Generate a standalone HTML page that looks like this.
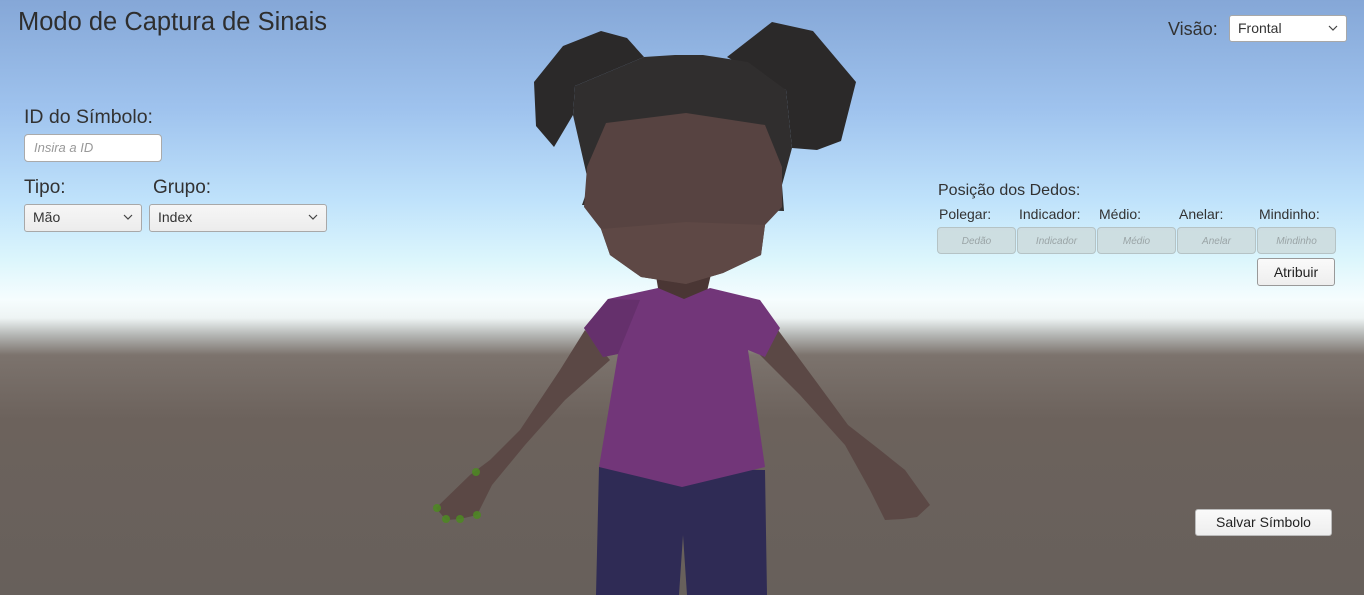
<!DOCTYPE html>
<html><head><meta charset="utf-8"><style>
*{margin:0;padding:0;box-sizing:border-box}
body{width:1364px;height:595px;overflow:hidden;position:relative;font-family:"Liberation Sans",sans-serif;color:#323232;
background:linear-gradient(to bottom,#85a7d7 0px,#9fc3ee 110px,#bfe2fb 200px,#dcf6fc 260px,#f6fdfe 300px,#eef4f4 318px,#b4b6b4 335px,#7c736d 355px,#6c625c 420px,#67605b 595px)}
.t{position:absolute;white-space:nowrap}
.dd{position:absolute;background:linear-gradient(#f6f6f6,#ececec);border:1px solid #a8a8a8;border-radius:3px;font-size:14px;padding:0 8px;line-height:25px;color:#333}
.dd svg{position:absolute;right:8px;top:9px}
.fb{position:absolute;top:227px;height:27px;background:rgba(205,218,220,.85);border:1px solid #b5c3c5;border-radius:4px;font-size:10px;font-style:italic;color:#9aa4a6;text-align:center;line-height:27px}
.btn{position:absolute;background:linear-gradient(#fafafa,#eeeeee);border:1px solid #999;border-radius:3px;font-size:14px;text-align:center;color:#222}
</style></head><body>
<svg width="1364" height="595" style="position:absolute;left:0;top:0">
<!-- arms -->
<polygon points="585,330 560,370 520,430 490,460 470,475 436,508 446,520 460,519 477,515 492,485 525,445 565,400 610,360" fill="#5b4845"/>
<polygon points="778,330 815,380 848,425 880,450 905,470 930,505 917,517 903,519 885,520 870,490 845,445 800,395 760,355" fill="#5b4845"/>
<!-- pants -->
<polygon points="599,467 765,470 767,595 687,595 683,535 679,595 596,595" fill="#2f2b55"/>
<!-- neck -->
<polygon points="655,270 712,270 705,300 660,300" fill="#4a3634"/>
<!-- shirt -->
<polygon points="608,299 658,288 684,299 710,288 760,300 780,328 765,357 748,350 765,467 682,487 599,467 618,354 603,357 584,328" fill="#723679"/>
<polygon points="608,299 584,328 603,357 618,354 640,300" fill="#65306c"/>
<!-- hair buns -->
<polygon points="534,82 563,46 601,31 627,38 644,57 575,86 573,115 554,147 536,126" fill="#2b2929"/>
<polygon points="727,57 772,22 813,31 856,82 841,141 817,150 792,148 786,90" fill="#2b2929"/>
<polygon points="575,86 644,57 675,55 703,55 748,62 786,90 792,148 782,185 784,211 582,205 589,185 573,115" fill="#302e2e"/>
<!-- face -->
<polygon points="606,123 686,113 765,125 782,167 782,207 765,225 761,255 723,273 686,284 641,277 610,255 601,229 584,207 587,167" fill="#574341"/>
<polygon points="601,229 686,222 765,225 761,255 723,273 686,284 641,277 610,255" fill="#5e4845"/>
<!-- green dots -->
<g fill="#4d8a22" opacity=".85"><circle cx="437" cy="508" r="4"/><circle cx="446" cy="519" r="4"/><circle cx="460" cy="519" r="4"/><circle cx="477" cy="515" r="4"/><circle cx="476" cy="472" r="4"/></g>
</svg>
<div class="t" style="left:18px;top:8px;font-size:25.5px;color:#2e2e2e">Modo de Captura de Sinais</div>
<div class="t" style="left:1168px;top:19px;font-size:18px">Visão:</div>
<div class="dd" style="left:1229px;top:15px;width:118px;height:27px;background:#fff">Frontal<svg width="10" height="6"><path d="M1 1L5 5L9 1" stroke="#444" fill="none" stroke-width="1.2"/></svg></div>
<div class="t" style="left:24px;top:106px;font-size:19.5px">ID do Símbolo:</div>
<div style="position:absolute;left:24px;top:134px;width:138px;height:28px;background:#fff;border:1px solid #aaa;border-radius:4px;font-size:13px;font-style:italic;color:#999;padding-left:9px;line-height:26px">Insira a ID</div>
<div class="t" style="left:24px;top:177px;font-size:19px">Tipo:</div>
<div class="t" style="left:153px;top:177px;font-size:19px">Grupo:</div>
<div class="dd" style="left:24px;top:204px;width:118px;height:28px">Mão<svg width="10" height="6"><path d="M1 1L5 5L9 1" stroke="#444" fill="none" stroke-width="1.2"/></svg></div>
<div class="dd" style="left:149px;top:204px;width:178px;height:28px">Index<svg width="10" height="6"><path d="M1 1L5 5L9 1" stroke="#444" fill="none" stroke-width="1.2"/></svg></div>
<div class="t" style="left:938px;top:182px;font-size:16px">Posição dos Dedos:</div>
<div class="t" style="left:939px;top:206px;font-size:14px">Polegar:</div>
<div class="t" style="left:1019px;top:206px;font-size:14px">Indicador:</div>
<div class="t" style="left:1099px;top:206px;font-size:14px">Médio:</div>
<div class="t" style="left:1179px;top:206px;font-size:14px">Anelar:</div>
<div class="t" style="left:1259px;top:206px;font-size:14px">Mindinho:</div>
<div class="fb" style="left:937px;width:79px">Dedão</div>
<div class="fb" style="left:1017px;width:79px">Indicador</div>
<div class="fb" style="left:1097px;width:79px">Médio</div>
<div class="fb" style="left:1177px;width:79px">Anelar</div>
<div class="fb" style="left:1257px;width:79px">Mindinho</div>
<div class="btn" style="left:1257px;top:258px;width:78px;height:28px;line-height:26px">Atribuir</div>
<div class="btn" style="left:1195px;top:509px;width:137px;height:27px;line-height:25px;border-color:#bbb">Salvar Símbolo</div>
</body></html>
